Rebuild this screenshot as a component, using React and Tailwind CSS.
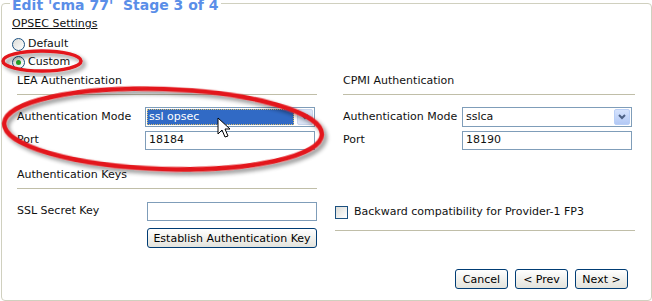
import React from "react";

function Radio({ checked, label }) {
  return (
    <label className="flex h-[18px] items-center gap-[3px]">
      <span className="flex h-[13px] w-[13px] items-center justify-center rounded-full border border-[#1c5180] bg-gradient-to-br from-[#dcdcd7] to-white">
        {checked && <span className="h-[5px] w-[5px] rounded-full bg-[#21a121]" />}
      </span>
      <span>{label}</span>
    </label>
  );
}

function Chevron() {
  return (
    <svg width="8" height="6" viewBox="0 0 8 6">
      <path d="M1 1 L4 4 L7 1" fill="none" stroke="#4d6185" strokeWidth="2" />
    </svg>
  );
}

function Select({ value, active }) {
  return (
    <div className="flex h-[20px] w-[170px] border border-[#7f9db9] bg-white p-[1px]">
      <div className="flex flex-1 pr-[3px]">
        <div
          className={
            active
              ? "flex flex-1 items-center bg-[#316ac5] px-[2px] text-white outline-1 outline-dotted outline-[#d8c070] -outline-offset-1"
              : "flex flex-1 items-center px-[2px]"
          }
        >
          {value}
        </div>
      </div>
      <div
        className={
          active
            ? "flex w-[16px] items-center justify-center rounded-[2px] border border-[#c8d4ec] bg-[#dbe4f5]"
            : "flex w-[16px] items-center justify-center rounded-[2px] border border-[#b9cff7] bg-gradient-to-b from-[#d6e3fd] to-[#b3c9f5]"
        }
      >
        <Chevron />
      </div>
    </div>
  );
}

function Input({ value, w = "w-[170px]" }) {
  return (
    <div className={"flex h-[19px] items-center border border-[#7f9db9] bg-white px-[3px] " + w}>
      {value}
    </div>
  );
}

function Button({ children, w }) {
  return (
    <button className={"h-[20px] rounded-[3px] border border-[#003c74] bg-gradient-to-b from-white to-[#e3e3dc] px-[4px] leading-none text-black " + w}>
      {children}
    </button>
  );
}

function Heading({ children }) {
  return (
    <div className="border-b border-[#c0bea8] pb-[6px] leading-[14px]">{children}</div>
  );
}

export default function App() {
  return (
    <div className="relative h-[301px] w-[652px] overflow-hidden bg-white text-[11px] text-[#111] font-['DejaVu_Sans',Verdana,sans-serif]">
      <fieldset className="-mt-[5px] ml-[1px] h-[306px] w-[651px] rounded-[4px] border border-[#d0d0bf]">
        <legend className="ml-[8px] whitespace-pre px-[2px] pt-[3px] text-[14px] font-bold leading-[14px] text-[#5a8ee8]">
          {"Edit 'cma 77'  Stage 3 of 4"}
        </legend>

        <div className="pl-[10px] pt-[5px]">
          <div className="leading-[14px] underline">OPSEC Settings</div>
          <div className="mt-[4px]">
            <Radio label="Default" />
            <Radio checked label="Custom" />
          </div>
        </div>

        <div className="mt-[3px] grid grid-cols-[300px_300px] gap-x-[18px] pl-[15px]">
          <div>
            <Heading>LEA Authentication</Heading>
            <div className="mt-[12px] flex items-center justify-between pr-[2px]">
              <span>Authentication Mode</span>
              <Select value="ssl opsec" active />
            </div>
            <div className="mt-[4px] flex items-center justify-between pr-[2px]">
              <span>Port</span>
              <Input value="18184" />
            </div>
          </div>
          <div className="pl-[8px]">
            <Heading>CPMI Authentication</Heading>
            <div className="mt-[12px] flex items-center justify-between pr-[3px]">
              <span>Authentication Mode</span>
              <Select value="sslca" />
            </div>
            <div className="mt-[4px] flex items-center justify-between pr-[3px]">
              <span>Port</span>
              <Input value="18190" />
            </div>
          </div>

          <div className="mt-[18px]">
            <Heading>Authentication Keys</Heading>
            <div className="mt-[13px] flex items-center justify-between">
              <span>SSL Secret Key</span>
              <Input value="" />
            </div>
            <div className="mt-[7px] flex justify-end">
              <Button w="w-[170px]">Establish Authentication Key</Button>
            </div>
          </div>
          <div className="mt-[54px]">
            <div className="flex items-center gap-[6px] border-b border-[#c0bea8] pb-[9px]">
              <span className="h-[13px] w-[13px] border border-[#1c5180] bg-gradient-to-br from-[#dcdcd7] to-white" />
              <span>Backward compatibility for Provider-1 FP3</span>
            </div>
          </div>
        </div>

        <div className="mt-[21px] flex justify-end gap-[7px] pr-[23px]">
          <Button w="w-[53px]">Cancel</Button>
          <Button w="w-[53px]">&lt; Prev</Button>
          <Button w="w-[53px]">Next &gt;</Button>
        </div>
      </fieldset>

      <svg className="pointer-events-none absolute left-0 top-0" width="652" height="301">
        <defs>
          <filter id="sh" x="-10%" y="-30%" width="120%" height="160%">
            <feGaussianBlur in="SourceAlpha" stdDeviation="2" />
            <feOffset dx="3" dy="3" result="b" />
            <feComponentTransfer>
              <feFuncA type="linear" slope="0.45" />
            </feComponentTransfer>
            <feMerge>
              <feMergeNode />
              <feMergeNode in="SourceGraphic" />
            </feMerge>
          </filter>
        </defs>
        <ellipse cx="42" cy="61" rx="39" ry="10" fill="none" stroke="#e3161b" strokeWidth="3.5" filter="url(#sh)" />
        <ellipse cx="163" cy="129" rx="159" ry="40" fill="none" stroke="#e3161b" strokeWidth="4.5" filter="url(#sh)" transform="rotate(2 163 129)" />
        <path
          d="M218 118 L218 134 L222 130 L225 137 L228 136 L225 129 L230 129 Z"
          fill="white"
          stroke="black"
          strokeWidth="1"
          strokeLinejoin="round"
        />
      </svg>
    </div>
  );
}
